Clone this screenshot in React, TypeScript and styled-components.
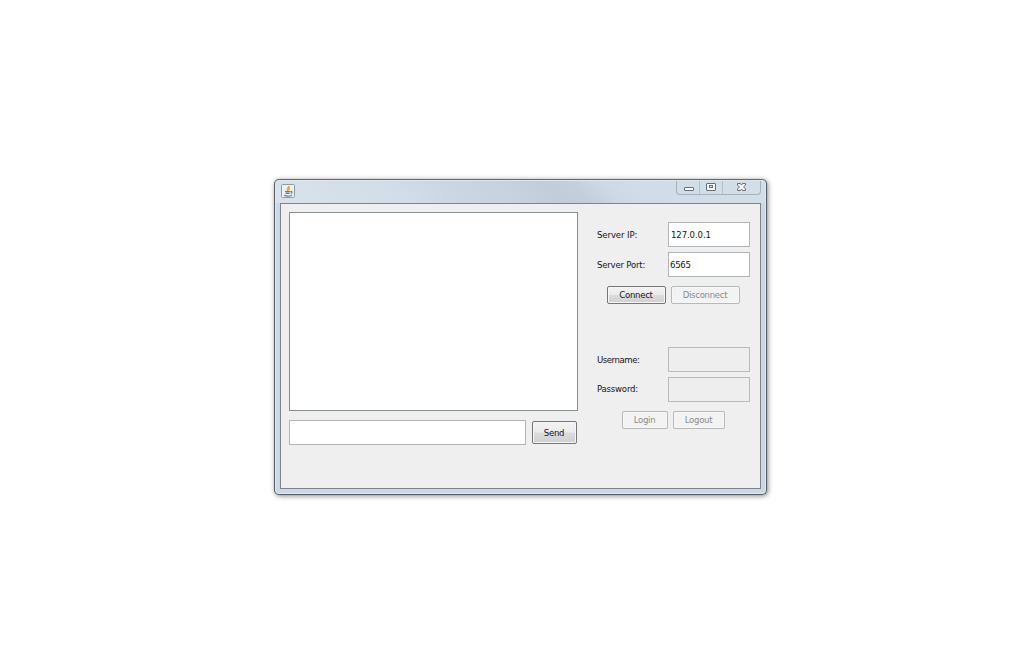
import React from "react";
import styled, { createGlobalStyle } from "styled-components";

const GlobalStyle = createGlobalStyle`
  * { box-sizing: border-box; }
  body { margin: 0; background: #fff; font-family: "DejaVu Sans Condensed", "DejaVu Sans", Tahoma, sans-serif; font-stretch: condensed; font-size: 9.5px; color: #15151c; }
  input, textarea, button { font: inherit; color: inherit; outline: none; margin: 0; }
`;

const Desktop = styled.main`
  height: 650px;
  padding: 179px 0 0 274px;
  overflow: hidden;
`;

const WindowFrame = styled.section`
  width: 493px;
  height: 316px;
  display: flex;
  flex-direction: column;
  padding: 0 5px 5px;
  border: 1px solid #555d66;
  border-top-color: #62686d;
  border-radius: 5px;
  background: #cbd9e7;
  box-shadow: inset 0 0 0 1px #dde8f1, 1px 1px 5px rgba(0, 0, 0, 0.48);
`;

const TitleBar = styled.header`
  height: 23px;
  flex: none;
  margin: 0 -4px;
  padding: 0 4px 0 5px;
  display: flex;
  justify-content: space-between;
  border-radius: 4px 4px 0 0;
  border-top: 1px solid #dfe8ee;
  background: linear-gradient(40deg, #d8e2ea 0%, #d1dde8 26%, #cad7e3 37%, #c7d3df 46%, #c1cdd9 56%, #c3cfdb 62%, #ccd9e4 67%, #d0dce7 73%, #d2dee8 100%);
`;

const AppIcon = styled.svg`
  width: 14px;
  height: 14px;
  margin: 3px 0 0 0;
  display: block;
`;

const Controls = styled.div`
  display: flex;
  width: 85px;
  height: 14px;
  border: 1px solid #a5b2bd;
  border-top: 0;
  border-radius: 0 0 4px 4px;
`;

const Control = styled.button<{ $w: number }>`
  width: ${(p) => p.$w}px;
  height: 13px;
  padding: 0;
  border: 0;
  border-right: 1px solid #b2bec8;
  background: transparent;
  &:last-child { border-right: 0; }
  svg { display: block; }
`;

const Client = styled.div`
  flex: 1;
  display: flex;
  border: 1px solid #7d848a;
  background: #efefef;
  padding: 8px 10px 0 8px;
`;

const Chat = styled.div`
  width: 289px;
  display: flex;
  flex-direction: column;
  gap: 9px;
`;

const Transcript = styled.textarea`
  height: 199px;
  display: block;
  resize: none;
  background: #fff;
  border: 1px solid #868e94;
  border-radius: 0;
`;

const Compose = styled.div`
  display: flex;
  align-items: center;
  gap: 6px;
`;

const Field = styled.input<{ $w: number; $indent?: number; $track?: number }>`
  width: ${(p) => p.$w}px;
  height: 25px;
  padding: 0 0 1px ${(p) => p.$indent ?? 2}px;
  border: 1px solid #b2b5b8;
  border-radius: 0;
  background: #fff;
  letter-spacing: ${(p) => p.$track ?? 0}px;
  &:disabled { background: #eee; border-color: #b9babc; }
`;

const Button = styled.button<{ $w: number; $h?: number }>`
  width: ${(p) => p.$w}px;
  height: ${(p) => p.$h ?? 18}px;
  padding: 0 1px 1px 0;
  border: 1px solid #74777a;
  border-radius: 2px;
  background: linear-gradient(#f3f3f3 0%, #ebebeb 48%, #dcdcdc 52%, #d0d0d0 100%);
  box-shadow: inset 0 0 0 1px #f7f7f7;
  letter-spacing: -0.28px;
  white-space: nowrap;
  &:disabled { color: #8b8b8b; background: #f3f3f3; border-color: #b5b9ba; }
`;

const Sidebar = styled.div`
  width: 153px;
  margin-left: 19px;
  padding-top: 10px;
`;

const Row = styled.label`
  display: flex;
  align-items: center;
  justify-content: space-between;
  height: 25px;
  margin-bottom: 5px;
`;

const Caption = styled.span<{ $track?: number; $lift?: number }>`
  padding-bottom: ${(p) => p.$lift ?? 1}px;
  letter-spacing: ${(p) => p.$track ?? -0.2}px;
`;

const Actions = styled.div<{ $indent: number; $top: number }>`
  display: flex;
  gap: 5px;
  padding-left: ${(p) => p.$indent}px;
  margin-top: ${(p) => p.$top}px;
`;

const LoginGroup = styled.div`
  margin-top: 43px;
`;

export default function App() {
  return (
    <>
      <GlobalStyle />
      <Desktop>
        <WindowFrame>
          <TitleBar>
            <AppIcon viewBox="0 0 14 14">
              <rect x=".5" y=".5" width="13" height="13" rx="1" fill="#eef1f2" stroke="#8e9ba6" />
              <path d="M7.8 1.8C8.2 3.6 4.8 4.3 6.7 7M9 3.6C7.3 4.5 7.4 5.3 8 6.5" fill="none" stroke="#e6a34c" strokeWidth="1.4" />
              <path d="M4 7.7h5.2M4.6 9.3h4M3 11.3c2 .8 6 .8 8-.1M9.6 7.5c2-.4 1.7 1.5.1 2" fill="none" stroke="#5c7f9e" strokeWidth="1.2" />
            </AppIcon>
            <Controls>
              <Control $w={23} aria-label="Minimize">
                <svg width="22" height="13"><rect x="7.5" y="6.5" width="9" height="3" rx=".5" fill="#fff" stroke="#686e75" /></svg>
              </Control>
              <Control $w={23} aria-label="Maximize">
                <svg width="22" height="13"><rect x="6.5" y="2.5" width="9" height="7" rx=".5" fill="#f5f6f7" stroke="#686e75" /><rect x="9.5" y="4.5" width="3" height="2" fill="#dce4ea" stroke="#686e75" /></svg>
              </Control>
              <Control $w={37} aria-label="Close">
                <svg width="37" height="13"><path d="M14.5 2.5h3l1 1.5 1-1.5h3v1.5L20.6 6l1.9 2v1.5h-3l-1-1.5-1 1.5h-3V8l1.9-2-1.9-2z" fill="#f5f6f7" stroke="#686e75" /></svg>
              </Control>
            </Controls>
          </TitleBar>
          <Client>
            <Chat>
              <Transcript readOnly />
              <Compose>
                <Field $w={237} />
                <Button $w={45} $h={23}>Send</Button>
              </Compose>
            </Chat>
            <Sidebar>
              <Row><Caption $track={-0.1}>Server IP:</Caption><Field $w={82} $track={-0.1} defaultValue="127.0.0.1" /></Row>
              <Row><Caption>Server Port:</Caption><Field $w={82} $indent={1} $track={-0.3} defaultValue="6565" /></Row>
              <Actions $indent={10} $top={9}>
                <Button $w={59}>Connect</Button>
                <Button $w={69} disabled>Disconnect</Button>
              </Actions>
              <LoginGroup>
                <Row><Caption $track={-0.45}>Username:</Caption><Field $w={82} disabled /></Row>
                <Row><Caption $lift={3}>Password:</Caption><Field $w={82} disabled /></Row>
                <Actions $indent={25} $top={9}>
                  <Button $w={46} disabled>Login</Button>
                  <Button $w={52} disabled>Logout</Button>
                </Actions>
              </LoginGroup>
            </Sidebar>
          </Client>
        </WindowFrame>
      </Desktop>
    </>
  );
}
